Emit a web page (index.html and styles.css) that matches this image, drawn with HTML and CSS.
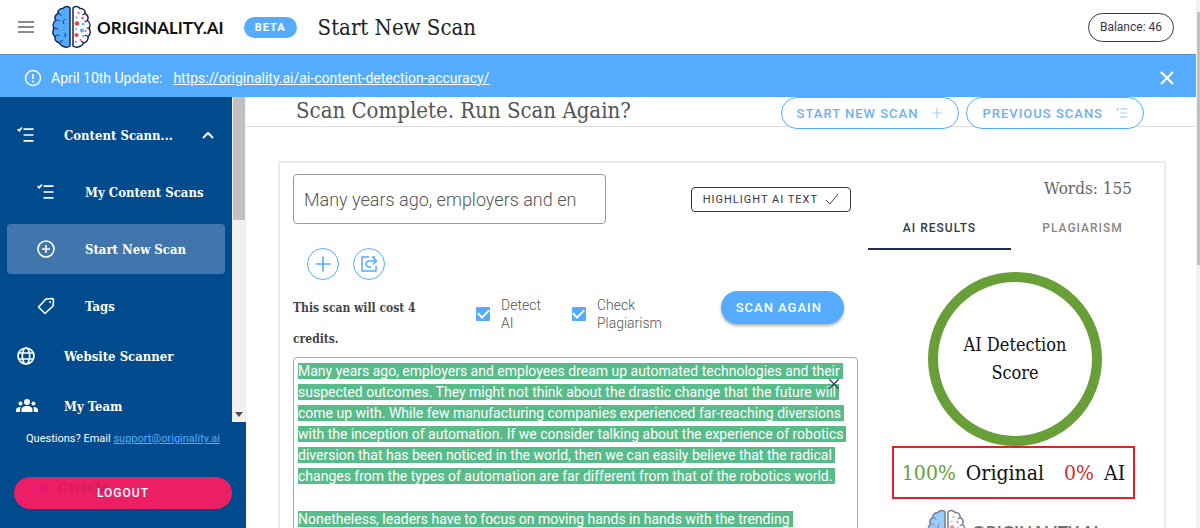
FILE: index.html
```html
<!DOCTYPE html>
<html lang="en">
  <head>
    <meta charset="UTF-8" />
    <meta name="viewport" content="width=device-width, initial-scale=1.0" />
    <title>Start New Scan - Originality.AI</title>
    <link rel="stylesheet" href="styles.css" />
  </head>
  <body>
    <svg class="sprite" aria-hidden="true">
      <symbol id="brain" viewBox="0 0 40 44">
        <path d="M18.500 3C17 1 13 1 11.500 3.500C8 3 6 6 6.500 8.500C3.500 10 3 13 4 15.500C1.500 17.500 1 21 2.500 23.500C0.500 26 1 30 3.500 31.500C3 35 5 37.500 8 38C9.500 41.500 15 43.500 18.500 41Z" fill="#55acfe" stroke="#1c2750" stroke-width="1.500" />
        <path d="M6.500 8.500C8 8 9.500 9 9.500 10.500M4 15.500C5.500 14.500 7 15 8 16M13 14.500C11 15.500 11 18 12.500 19M2.500 23.500C4 22.500 6 23 6.500 24.500M3.500 31.500C5 29.500 7 29.500 8 31M13 28C14.500 29 14.500 31 13 32M8 38C8 36.500 9.500 35.500 11 36" fill="none" stroke="#1c2750" stroke-width="1" stroke-linecap="round" />
        <path d="M21.500 3C23 1 27 1 28.500 3.500C32 3 34 6 33.500 8.500C36.500 10 37 13 36 15.500C38.500 17.500 39 21 37.500 23.500C39.500 26 39 30 36.500 31.500C37 35 35 37.500 32 38C30.500 41.500 25 43.500 21.500 41Z" fill="#fff" stroke="#1c2750" stroke-width="1.500" />
        <path d="M33.500 8.500L31 10M36 15.500L33 17M37.500 23.500L35 23M36.500 31.500L33.500 30M32 38L30 36" stroke="#1c2750" stroke-width="1.200" />
        <g fill="#f04444">
          <circle cx="25.500" cy="18.500" r="2.300" /><circle cx="25" cy="30" r="2.100" /><circle cx="31" cy="13" r="1.200" /><circle cx="27" cy="8" r="1.100" /><circle cx="34" cy="26" r="1" /><circle cx="29" cy="35" r="1" />
        </g>
        <g fill="#55acfe">
          <circle cx="30.500" cy="25.500" r="2" /><circle cx="25" cy="12.500" r="1.100" /><circle cx="31.500" cy="19" r="1.200" /><circle cx="24.500" cy="24" r="1" /><circle cx="32" cy="31" r="1.200" /><circle cx="24.500" cy="37" r="1.100" />
        </g>
      </symbol>
      <symbol id="list-check" viewBox="0 0 24 24">
        <path d="M9 5H21M9 12H21M9 19H21M2 5L4 7L7 3" fill="none" stroke="currentColor" stroke-width="2" />
      </symbol>
      <symbol id="plus" viewBox="0 0 24 24">
        <path d="M12 3V21M3 12H21" fill="none" stroke="currentColor" stroke-width="2" />
      </symbol>
      <symbol id="close" viewBox="0 0 24 24">
        <path d="M5 5L19 19M19 5L5 19" fill="none" stroke="currentColor" stroke-width="2" />
      </symbol>
    </svg>

    <header class="topbar">
      <button class="icon-btn" aria-label="Toggle menu">
        <svg width="18" height="12" viewBox="0 0 18 12"><path d="M1 1H17M1 6H17M1 11H17" stroke="#666" stroke-width="1.500" /></svg>
      </button>
      <a href="#" class="logo">
        <svg class="logo-brain"><use href="#brain" /></svg>
        <span>ORIGINALITY.AI</span>
      </a>
      <span class="beta">BETA</span>
      <h1>Start New Scan</h1>
      <span class="balance">Balance: 46</span>
    </header>

    <div class="banner">
      <svg width="18" height="18" viewBox="0 0 18 18"><circle cx="9" cy="9" r="7.500" fill="none" stroke="#fff" stroke-width="1.500" /><path d="M9 5V10M9 11.500V13.500" stroke="#fff" stroke-width="1.600" /></svg>
      <span>April 10th Update:</span>
      <a href="#">https://originality.ai/ai-content-detection-accuracy/</a>
      <button class="icon-btn banner-close" aria-label="Close">
        <svg width="20" height="20" viewBox="0 0 20 20"><path d="M4 4L16 16M16 4L4 16" stroke="#fff" stroke-width="2.200" /></svg>
      </button>
    </div>

    <div class="layout">
      <aside class="sidebar">
        <div class="nav-scroll">
          <nav>
            <a href="#" class="nav-item">
              <svg width="20" height="20"><use href="#list-check" /></svg>
              <span>Content Scann...</span>
              <svg class="chevron" width="14" height="14" viewBox="0 0 14 14"><path d="M2 10L7 5L12 10" fill="none" stroke="#fff" stroke-width="2" /></svg>
            </a>
            <a href="#" class="nav-item child">
              <svg width="20" height="20"><use href="#list-check" /></svg>
              <span>My Content Scans</span>
            </a>
            <a href="#" class="nav-item child active">
              <svg width="20" height="20" viewBox="0 0 20 20"><circle cx="10" cy="10" r="8" fill="none" stroke="#fff" stroke-width="1.600" /><path d="M10 6V14M6 10H14" stroke="#fff" stroke-width="1.600" /></svg>
              <span>Start New Scan</span>
            </a>
            <a href="#" class="nav-item child">
              <svg width="20" height="20" viewBox="0 0 20 20"><path d="M10 3L16 2.500Q17.500 2.500 17.500 4L17 10L9 17.500L2.500 11Z" fill="none" stroke="#fff" stroke-width="1.600" stroke-linejoin="round" /><circle cx="14" cy="6" r="1" fill="#fff" /></svg>
              <span>Tags</span>
            </a>
            <a href="#" class="nav-item">
              <svg width="20" height="20" viewBox="0 0 20 20"><g fill="none" stroke="#fff" stroke-width="1.700"><circle cx="10" cy="10" r="8" /><ellipse cx="10" cy="10" rx="3.700" ry="8" /><path d="M2.500 7H17.500M2.500 13H17.500" /></g></svg>
              <span>Website Scanner</span>
            </a>
            <a href="#" class="nav-item">
              <svg class="team-icon" width="22" height="20" viewBox="0 0 22 20" fill="#fff"><circle cx="11" cy="6" r="3" /><circle cx="4.500" cy="7.500" r="2" /><circle cx="17.500" cy="7.500" r="2" /><path d="M5.500 16V14C5.500 11 8 10 11 10S16.500 11 16.500 14V16ZM0 16V14C0 12 2 11 4.700 11Q4 12.500 4 16ZM22 16V14C22 12 20 11 17.300 11Q18 12.500 18 16Z" /></svg>
              <span>My Team</span>
            </a>
          </nav>
          <div class="nav-track">
            <div class="nav-thumb"></div>
            <svg width="8" height="5" viewBox="0 0 8 5"><path d="M0 0H8L4 5Z" fill="#505050" /></svg>
          </div>
        </div>
        <div class="sidebar-footer">
          <p>Questions? Email <a href="#">support@originality.ai</a></p>
          <button class="logout">
            <span class="shortcut" aria-hidden="true"><svg width="14" height="12" viewBox="0 0 14 12"><rect width="14" height="12" rx="2" fill="#f0147a" /><path d="M3 4H11M3 7H11" stroke="#c11c58" stroke-dasharray="2 1" /></svg>Ctrl+M</span>
            <span class="logout-label">LOGOUT</span>
          </button>
        </div>
      </aside>

      <main>
        <div class="page-head">
          <h2>Scan Complete. Run Scan Again?</h2>
          <button class="pill">START NEW SCAN <svg width="14" height="14"><use href="#plus" /></svg></button>
          <button class="pill">PREVIOUS SCANS <svg width="14" height="14"><use href="#list-check" /></svg></button>
        </div>

        <div class="card">
          <section class="scan">
            <div class="scan-top">
              <input type="text" class="title-input" aria-label="Scan title" value="Many years ago, employers and en" />
              <button class="highlight-btn">HIGHLIGHT AI TEXT <svg width="14" height="12" viewBox="0 0 14 12"><path d="M1 7L5 11L13 1" fill="none" stroke="#3c4a5c" /></svg></button>
            </div>

            <div class="round-buttons">
              <button aria-label="Add"><svg width="20" height="20"><use href="#plus" /></svg></button>
              <button aria-label="Import from URL">
                <svg width="18" height="18" viewBox="0 0 18 18"><path d="M9 2H2V16H16V11M12 2H15M16 6H10Q6 6 6 9Q6 12 10 12H11M13 2.500L16.500 6L13 9.500" fill="none" stroke="#55acfe" stroke-width="1.500" /></svg>
              </button>
            </div>

            <div class="options">
              <p class="cost">This scan will cost 4 credits.</p>
              <div class="check">
                <input type="checkbox" id="detectAi" checked />
                <label for="detectAi">Detect<br />AI</label>
              </div>
              <div class="check">
                <input type="checkbox" id="checkPlagiarism" checked />
                <label for="checkPlagiarism">Check<br />Plagiarism</label>
              </div>
              <button class="scan-btn">SCAN AGAIN</button>
            </div>

            <div class="editor">
              <div class="editor-text" role="textbox" aria-label="Content" aria-multiline="true" contenteditable="true" spellcheck="false">
                <p><mark>Many years ago, employers and employees dream up automated technologies and their<br />suspected outcomes. They might not think about the drastic change that the future will<br />come up with. While few manufacturing companies experienced far-reaching diversions<br />with the inception of automation. If we consider talking about the experience of robotics<br />diversion that has been noticed in the world, then we can easily believe that the radical<br />changes from the types of automation are far different from that of the robotics world.</mark></p>
                <p><mark>Nonetheless, leaders have to focus on moving hands in hands with the trending</mark></p>
              </div>
              <button class="icon-btn clear" aria-label="Clear text"><svg width="16" height="16"><use href="#close" /></svg></button>
            </div>
          </section>

          <section class="results">
            <p class="words">Words: 155</p>
            <div class="tabs" role="tablist">
              <button role="tab" aria-selected="true" class="selected">AI RESULTS</button>
              <button role="tab" aria-selected="false">PLAGIARISM</button>
            </div>
            <div class="score-ring">AI Detection<br />Score</div>
            <div class="score">
              <span class="good">100%</span>
              <span class="original">Original</span>
              <span class="bad">0%</span>
              <span>AI</span>
            </div>
            <div class="logo logo-faded">
              <svg class="logo-brain"><use href="#brain" /></svg>
              <span>ORIGINALITY.AI</span>
            </div>
          </section>
        </div>
      </main>
    </div>
    <div class="page-track"><div class="page-thumb"></div></div>
  </body>
</html>
```
FILE: styles.css
```css
* {
  box-sizing: border-box;
}

body {
  margin: 0;
  padding-right: 4px;
  height: 100vh;
  overflow: hidden;
  display: flex;
  flex-direction: column;
  font-family: Roboto, sans-serif;
  color: #222;
  background: #fff;
}

h1,
h2,
p {
  margin: 0;
}

button {
  font-family: inherit;
  cursor: pointer;
}

svg {
  flex: none;
}

.sprite {
  position: absolute;
  width: 0;
  height: 0;
}

.icon-btn {
  display: flex;
  padding: 0;
  border: 0;
  background: none;
}

h1,
h2,
.nav-item,
.cost,
.words,
.score-ring,
.score {
  font-family: "Roboto Slab", "DejaVu Serif Condensed", "DejaVu Serif", serif;
}

/* top bar */
.topbar {
  flex: none;
  display: flex;
  align-items: center;
  height: 54px;
  padding: 0 22px 0 17px;
}

.logo {
  display: flex;
  align-items: center;
  gap: 5px;
  margin-left: 16px;
  font-family: Lato, sans-serif;
  font-size: 17px;
  font-weight: 700;
  color: #111;
  text-decoration: none;
}

.logo-brain {
  width: 41px;
  height: 44px;
}

.beta {
  margin-left: 20px;
  padding: 0 11px;
  border-radius: 11px;
  background: #55acfe;
  color: #fff;
  font-size: 11px;
  font-weight: 700;
  line-height: 21px;
  letter-spacing: 1px;
}

h1 {
  margin-left: 21px;
  font-size: 22px;
  font-weight: 400;
}

.balance {
  margin-left: auto;
  padding: 0 11px;
  border: 1px solid #33384d;
  border-radius: 15px;
  font-size: 12px;
  line-height: 27px;
  color: #33384d;
}

/* announcement */
.banner {
  flex: none;
  position: relative;
  z-index: 1;
  display: flex;
  align-items: center;
  height: 43px;
  padding: 3px 19px 0 24px;
  border-top: 1px solid #5a93cc;
  background: #55acfe;
  color: #fff;
  font-size: 14px;
}

.banner span {
  margin: 0 11px 0 9px;
}

.banner a {
  color: #fff;
}

.banner-close {
  margin-left: auto;
}

.layout {
  flex: 1;
  min-height: 0;
  display: flex;
}

/* sidebar */
.sidebar {
  flex: none;
  width: 246px;
  display: flex;
  flex-direction: column;
  background: #004a8e;
  color: #fff;
}

.nav-scroll {
  flex: 1;
  min-height: 0;
  display: flex;
  overflow: hidden;
}

nav {
  flex: 1;
  padding: 13px 7px 0;
}

.nav-item {
  display: flex;
  align-items: center;
  gap: 28px;
  height: 50px;
  padding: 0 10px 0 9px;
  border-radius: 4px;
  font-size: 13px;
  font-weight: 700;
  color: #fff;
  text-decoration: none;
  white-space: nowrap;
}

.nav-item.child {
  gap: 29px;
  margin-top: 7px;
  padding-left: 29px;
}

.nav-item.active {
  background: #4076ab;
}

.team-icon {
  margin-right: -2px;
}

.chevron {
  margin-left: auto;
}

.nav-track {
  width: 15px;
  display: flex;
  flex-direction: column;
  align-items: center;
  justify-content: space-between;
  padding-bottom: 5px;
  background: #f1f1f1;
}

.nav-thumb {
  width: 12px;
  height: 123px;
  background: #c1c1c1;
}

.sidebar-footer {
  height: 106px;
  padding: 9px 14px 0;
  text-align: center;
}

.sidebar-footer p {
  font-size: 11px;
  line-height: 16px;
}

.sidebar-footer a {
  color: #55acfe;
}

.logout {
  position: relative;
  width: 100%;
  height: 32px;
  margin-top: 30px;
  border: 0;
  border-radius: 16px;
  background: #ed1f64;
  color: #fff;
  font-size: 12px;
  font-weight: 500;
  letter-spacing: 1px;
}

.logout-label {
  position: relative;
}

/* keyboard hint, shows faintly behind the label */
.shortcut {
  position: absolute;
  left: 22px;
  top: 0;
  display: flex;
  align-items: center;
  gap: 8px;
  font-size: 15px;
  line-height: 22px;
  color: #c11c58;
  opacity: 0.5;
}

/* main area */
main {
  flex: 1;
  min-width: 0;
}

.page-head {
  display: flex;
  align-items: flex-end;
  gap: 7px;
  height: 30px;
  padding: 0 52px 0 50px;
  border-bottom: 1px solid #ddd;
}

h2 {
  flex: 1;
  font-size: 22px;
  font-weight: 300;
  line-height: 30px;
  color: #555;
}

.pill {
  display: flex;
  align-items: center;
  gap: 12px;
  height: 32px;
  margin-bottom: -3px;
  padding: 0 14px 0 15px;
  border: 1px solid #55acfe;
  border-radius: 16px;
  background: #fff;
  color: #6cb0f5;
  font-size: 13px;
  font-weight: 500;
  letter-spacing: 1px;
}

.pill svg {
  opacity: 0.6;
}

.card {
  display: flex;
  gap: 10px;
  min-height: 500px;
  margin: 34px 30px 0 32px;
  padding: 11px 10px 11px 13px;
  border: 2px solid #ebebeb;
}

.scan {
  flex: 1;
  min-width: 0;
}

.scan-top {
  display: flex;
  align-items: center;
  justify-content: space-between;
  padding-right: 7px;
}

.title-input {
  width: 313px;
  height: 50px;
  padding: 0 10px;
  border: 1px solid #999;
  border-radius: 4px;
  font-family: Roboto, sans-serif;
  font-size: 18px;
  font-weight: 300;
  color: #555;
}

.highlight-btn {
  display: flex;
  align-items: center;
  gap: 7px;
  height: 25px;
  padding: 0 11px;
  border: 1px solid #33384d;
  border-radius: 4px;
  background: #fff;
  color: #33384d;
  font-size: 11px;
  font-weight: 400;
  letter-spacing: 1px;
}

.round-buttons {
  display: flex;
  gap: 14px;
  margin: 24px 0 0 14px;
}

.round-buttons button {
  display: flex;
  align-items: center;
  justify-content: center;
  width: 32px;
  height: 32px;
  padding: 0;
  border: 1px solid #55acfe;
  border-radius: 50%;
  background: #fff;
  color: #55acfe;
}

.options {
  display: flex;
  margin-top: 11px;
  padding-right: 14px;
}

.cost {
  width: 142px;
  margin: 2px 41px 0 0;
  font-size: 12px;
  font-weight: 700;
  line-height: 31px;
  color: #444;
}

.check {
  display: flex;
  align-items: center;
  gap: 11px;
  height: 36px;
  margin: 5px 31px 0 0;
  font-size: 14px;
  font-weight: 300;
  line-height: 18px;
  color: #555;
}

.check input {
  appearance: none;
  width: 14px;
  height: 14px;
  margin: 0;
  border-radius: 1px;
  background: #55acfe;
  display: grid;
  place-items: center;
}

.check input:checked::before {
  content: "";
  width: 9px;
  height: 5px;
  margin-bottom: 3px;
  border: solid #fff;
  border-width: 0 0 2px 2px;
  transform: rotate(-45deg);
}

.scan-btn {
  height: 33px;
  margin-left: auto;
  padding: 0 22px 0 15px;
  border: 0;
  border-radius: 17px;
  background: #55acfe;
  box-shadow: 0 2px 3px rgba(0, 0, 0, 0.3);
  color: #fff;
  font-size: 13px;
  font-weight: 500;
  letter-spacing: 1px;
}

.editor {
  position: relative;
  min-height: 240px;
  margin-top: 2px;
  padding: 3px 4px;
  border: 1px solid #aaa;
  border-radius: 4px;
}

.editor-text {
  font-size: 14px;
  line-height: 21px;
  white-space: nowrap;
}

.editor-text p {
  margin-bottom: 22px;
}

mark {
  padding-right: 3px;
  background: #57bb8a;
  color: #fff;
  -webkit-box-decoration-break: clone;
  box-decoration-break: clone;
}

.clear {
  position: absolute;
  top: 18px;
  right: 15px;
  color: #33475b;
}

/* results column */
.results {
  width: 286px;
}

.words {
  margin: 2px 22px 0 0;
  font-size: 17px;
  font-weight: 300;
  line-height: 24px;
  text-align: right;
  color: #666;
}

.tabs {
  display: flex;
}

.tabs button {
  flex: 1;
  height: 50px;
  padding: 8px 0 0;
  border: 0;
  border-bottom: 2px solid transparent;
  background: none;
  color: #888;
  font-size: 12px;
  font-weight: 500;
  letter-spacing: 1px;
}

.tabs .selected {
  border-color: #1d2d4a;
  color: #33384d;
}

.score-ring {
  display: flex;
  flex-direction: column;
  align-items: center;
  justify-content: center;
  width: 174px;
  height: 174px;
  margin: 22px 0 0 60px;
  border: 10px solid #689f38;
  border-radius: 50%;
  font-size: 18px;
  line-height: 28px;
  text-align: center;
  color: #111;
}

.score {
  display: flex;
  align-items: center;
  justify-content: center;
  gap: 10px;
  width: 243px;
  height: 53px;
  margin-left: 24px;
  border: 2px solid #ed1c24;
  font-size: 21px;
  color: #111;
}

.original {
  margin-right: 10px;
}

.good {
  color: #689f38;
}

.bad {
  color: #d32f2f;
}

.logo-faded {
  margin: 10px 0 0 58px;
  opacity: 0.6;
}

/* window scrollbar */
.page-track {
  position: fixed;
  top: 0;
  right: 0;
  width: 4px;
  height: 100vh;
  padding: 12px 0 0 1px;
  background: #f1f1f1;
}

.page-thumb {
  height: 253px;
  background: #c1c1c1;
}
```
